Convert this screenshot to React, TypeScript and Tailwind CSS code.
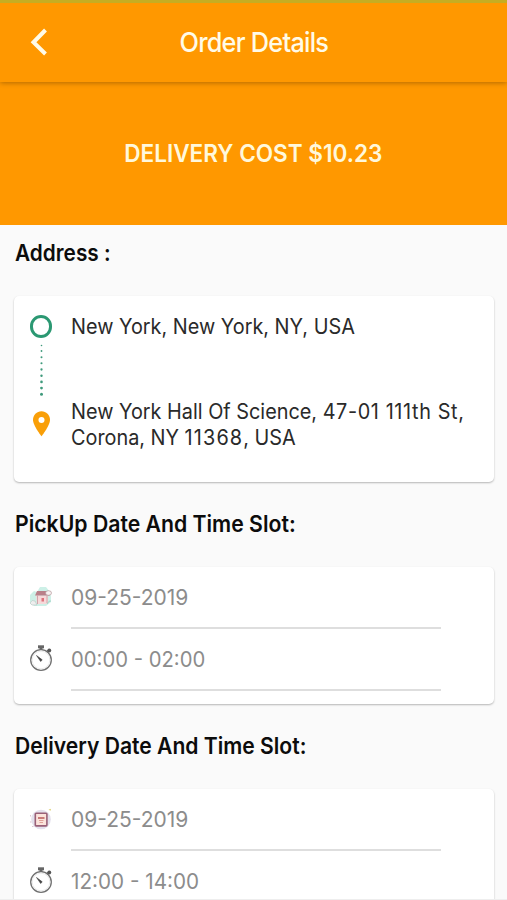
type SlotT = {
    title: string
    titleClass: string
    date: string
    time: string
    timeClass: string
    icon: React.ReactNode
}

const BackIcon = () => (
    <svg width="18" height="30" viewBox="0 0 18 30" fill="none">
        <path d="M15.5 2L3.500 14.300L15.500 26" stroke="#fffbe8" strokeWidth="4" />
    </svg>
)

const PinIcon = () => (
    <svg width="17" height="26" viewBox="0 0 18 27">
        <path d="M9 0C4 0 0 4 0 9c0 6.300 9 17.500 9 17.500S18 15.300 18 9c0-5-4-9-9-9z" fill="#f99f08" />
        <circle cx="9" cy="9.200" r="3.200" fill="#fff" />
    </svg>
)

// dots get bigger towards the destination
const Dots = () => (
    <svg width="6" height="54" viewBox="0 0 6 54" fill="#3f9a7c">
        <circle cx="3.500" cy="2.500" r="0.800" />
        <circle cx="3.500" cy="8" r="0.900" />
        <circle cx="3.500" cy="14.200" r="1" />
        <circle cx="3.500" cy="20.300" r="1.050" />
        <circle cx="3.500" cy="26.500" r="1.150" />
        <circle cx="3.500" cy="32.700" r="1.200" />
        <circle cx="3.500" cy="38.900" r="1.300" />
        <circle cx="3.500" cy="45.100" r="1.400" />
        <circle cx="3.500" cy="51.300" r="1.500" />
    </svg>
)

const StopwatchIcon = () => (
    <svg width="24" height="28" viewBox="0 0 24 28" fill="none">
        <circle cx="12" cy="15" r="10.300" stroke="#707070" strokeWidth="1.300" />
        <circle cx="12" cy="15" r="8.800" stroke="#ddd" strokeWidth="0.600" />
        <path d="M9 0.300h6v3h-6z" fill="#666" />
        <path d="M12 2.800v2" stroke="#666" strokeWidth="3" />
        <path d="M18.300 6.300l2.200-2" stroke="#555" strokeWidth="1.500" />
        <circle cx="20.300" cy="5.500" r="1.900" fill="#555" />
        <path d="M7.500 10.500l5.700 4.300-1.500 1.700z" fill="#444" stroke="#444" strokeWidth="0.600" />
    </svg>
)

const HouseIcon = () => (
    <svg width="24" height="22" viewBox="0 0 24 22">
        <path d="M1 9l4-4 3 1 3-5 6 0 4 5 1 5 0 5-5 4-12 0-4-4z" fill="#cdf0e7" />
        <path d="M1 17q2-4 5-2l2 4H3z" fill="#eeeeee" stroke="#b3c4c1" strokeWidth="0.600" />
        <path d="M7 9.500h12v8.500H8z" fill="#f6d9da" />
        <path d="M6 9.500L8 5h10l3 4.500z" fill="#b98089" />
        <path d="M8.500 9.500v8.500M18 10v7" stroke="#c9989f" strokeWidth="0.800" />
        <path d="M12.500 12h2.500v3.500h-2.500z" fill="#dd737d" />
        <ellipse cx="19.500" cy="7" rx="3" ry="2.300" fill="#f8f2f2" stroke="#a7878c" strokeWidth="0.600" />
        <path d="M18 18q2-4 4-3" stroke="#a5d3c8" fill="none" />
    </svg>
)

const CalendarIcon = () => (
    <svg width="24" height="24" viewBox="0 0 24 24">
        <circle cx="12" cy="12.500" r="9.800" fill="#e3e0ec" />
        <rect x="6.300" y="6.300" width="11.600" height="12.600" rx="0.800" fill="#fbe3dc" stroke="#9a6078" strokeWidth="1.600" />
        <path d="M9 10h6.500v2H9z" fill="#c97b7a" />
        <path d="M10 13.500h4.500M10.500 15.500h3.500" stroke="#e0a298" />
        <path d="M19.500 3l2-1.200.5 1.700z" fill="#d7c95c" />
        <path d="M1.500 8v1.500M1 15h1.500M3 19.500h1.500" stroke="#dcc5d1" />
    </svg>
)

const slots: SlotT[] = [
    {
        title: 'PickUp Date And Time Slot:',
        titleClass: 'scale-x-[0.943]',
        date: '09-25-2019',
        time: '00:00 - 02:00',
        timeClass: 'scale-x-[0.965]',
        icon: <HouseIcon />
    },
    {
        title: 'Delivery Date And Time Slot:',
        titleClass: 'scale-x-[0.938]',
        date: '09-25-2019',
        time: '12:00 - 14:00',
        timeClass: 'scale-x-[0.985]',
        icon: <CalendarIcon />
    },
]

const Row = ({ icon, text, textClass = '' }: { icon: React.ReactNode, text: string, textClass?: string }) => (
    <div className="flex h-[62px]">
        <div className="flex w-[57px] items-center justify-center pr-[3px] pb-[2px]">{icon}</div>
        <div className="flex w-[370px] items-center border-b-2 border-[#dedede] pt-[2px] text-[21px] text-[#8c8c8c]">
            <span className={`origin-left whitespace-nowrap ${textClass}`}>{text}</span>
        </div>
    </div>
)

const Slot = ({ title, titleClass, date, time, timeClass, icon }: SlotT) => (
    <section className="shrink-0">
        <h2 className="flex h-[85px] items-center pb-[2px] pl-px text-[22.5px] font-semibold text-[#0c0c0c]">
            <span className={`origin-left whitespace-nowrap ${titleClass}`}>{title}</span>
        </h2>
        <div className="h-[137px] rounded-[5px] bg-white shadow-[0_1px_2px_rgba(0,0,0,0.28)]">
            <Row icon={icon} text={date} />
            <Row icon={<StopwatchIcon />} text={time} textClass={timeClass} />
        </div>
    </section>
)

const App = () => {
    return (
        <div className="flex h-[900px] w-[507px] flex-col overflow-hidden border-b border-[#eeeeee] bg-[#fafafa] font-['Inter','Liberation_Sans',sans-serif]">
            <header className="relative grid h-[82px] shrink-0 grid-cols-[80px_1fr_80px] items-center border-t-[3px] border-[#c6ad22] bg-[#ff9800] shadow-[0_1px_5px_rgba(0,0,0,0.3)]">
                <button className="pl-[30px]" aria-label="Back"><BackIcon /></button>
                <h1 className="flex justify-center text-[27.5px] font-medium tracking-[-0.8px] text-[#fffbe8]">
                    <span className="scale-x-[0.92] whitespace-nowrap">Order Details</span>
                </h1>
            </header>
            <div className="flex h-[143px] shrink-0 items-center justify-center bg-[#ff9800] pt-px text-[24px] font-semibold text-[#fff8dc]">
                <span className="scale-x-[0.94] whitespace-nowrap">DELIVERY COST $10.23</span>
            </div>
            <main className="flex flex-col pr-[13px] pl-[14px]">
                <h2 className="h-[71px] shrink-0 pl-px text-[22.5px] leading-[56px] font-semibold text-[#0c0c0c]">
                    <span className="inline-block origin-left scale-x-[0.925]">Address :</span>
                </h2>
                <section className="flex h-[186px] shrink-0 rounded-[5px] bg-white shadow-[0_1px_2px_rgba(0,0,0,0.28)]">
                    <div className="flex w-[57px] flex-col items-center pt-[19px] pr-[3px]">
                        <div className="h-[23px] w-[22px] rounded-full border-[3px] border-[#2b9872]"></div>
                        <div className="mt-[5px]"><Dots /></div>
                        <div className="mt-[14px]"><PinIcon /></div>
                    </div>
                    <div className="pt-[18px] text-[21px] leading-[26px] text-[#2a2a2a]">
                        <p className="w-[400px] origin-left scale-x-[0.945] whitespace-nowrap">New York, New York, NY, USA</p>
                        <p className="mt-[59px] w-[400px] origin-left scale-x-[0.945] whitespace-nowrap">
                            New York Hall Of Science, <span className="tracking-[0.65px]">47-01 111th St,</span>
                            <br />
                            Corona, NY <span className="tracking-[1.2px]">11368</span>, USA
                        </p>
                    </div>
                </section>
                {slots.map((slot) => <Slot key={slot.title} {...slot} />)}
            </main>
        </div>
    )
}

export default App
